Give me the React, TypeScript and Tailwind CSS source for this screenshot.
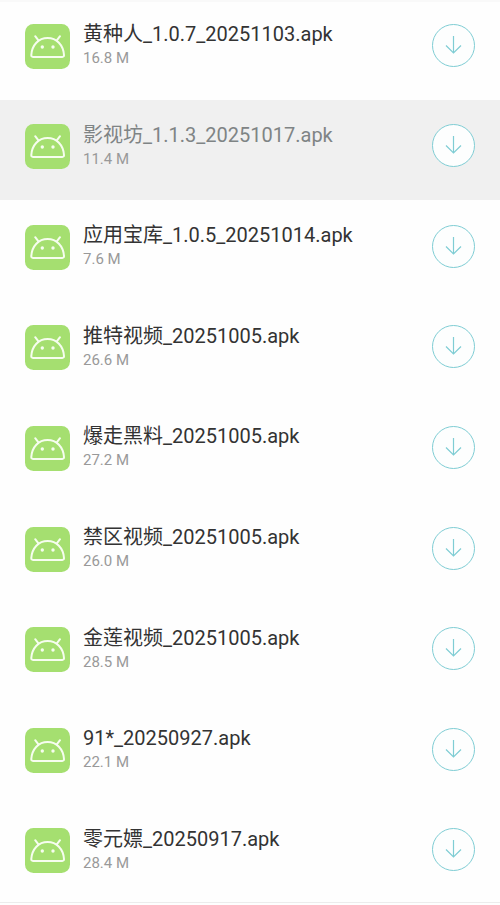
type ApkFile = { name: string; size: string; pressed?: boolean };

const files: ApkFile[] = [
  { name: "黄种人_1.0.7_20251103.apk", size: "16.8 M" },
  { name: "影视坊_1.1.3_20251017.apk", size: "11.4 M", pressed: true },
  { name: "应用宝库_1.0.5_20251014.apk", size: "7.6 M" },
  { name: "推特视频_20251005.apk", size: "26.6 M" },
  { name: "爆走黑料_20251005.apk", size: "27.2 M" },
  { name: "禁区视频_20251005.apk", size: "26.0 M" },
  { name: "金莲视频_20251005.apk", size: "28.5 M" },
  { name: "91*_20250927.apk", size: "22.1 M" },
  { name: "零元嫖_20250917.apk", size: "28.4 M" },
];

function AndroidIcon() {
  return (
    <svg viewBox="0 0 45 45" className="size-[45px] shrink-0" aria-hidden="true">
      <rect width="45" height="45" rx="8.5" fill="#a5df70" />
      <g fill="none" stroke="#f6fdef" strokeWidth="2" strokeLinecap="round" strokeLinejoin="round">
        <path d="M8 32.9C6.8 32.9 6.2 32.3 6.3 31C7 21.1 13.6 14 22.6 14S38.3 21.1 39 31C39.1 32.3 38.5 32.9 37.3 32.9Z" />
        <path d="M13.4 16.4L10.2 12.2M31.8 16.4L35 12.2" />
      </g>
      <circle cx="17.3" cy="23" r="1.7" fill="#f6fdef" />
      <circle cx="28" cy="23" r="1.7" fill="#f6fdef" />
    </svg>
  );
}

function DownloadButton({ name }: { name: string }) {
  return (
    <button
      type="button"
      aria-label={`下载 ${name}`}
      className="mb-0.5 flex size-[43px] shrink-0 items-center justify-center rounded-full border border-[#7fcdd4] bg-[#fdfefe] text-[#7fcdd4]"
    >
      <svg viewBox="0 0 17 19" className="h-[19px] w-[17px]" fill="none" stroke="currentColor" strokeWidth="1.2" aria-hidden="true">
        <path d="M8.5 0V17M1 9.5L8.5 17L16 9.5" />
      </svg>
    </button>
  );
}

function FileRow({ file }: { file: ApkFile }) {
  return (
    <li
      className={`flex items-center gap-[13px] px-[25px] pb-1.5 ${file.pressed ? "bg-[#f0f0f0]" : ""}`}
    >
      <AndroidIcon />
      <div className="flex min-w-0 flex-1 flex-col gap-0.5 pb-0.5">
        <p className={`truncate text-[20px] leading-6 ${file.pressed ? "text-[#7f8485]" : "text-[#333333]"}`}>
          {file.name}
        </p>
        <p className="text-[15px] leading-5 text-[#999999]">{file.size}</p>
      </div>
      <DownloadButton name={file.name} />
    </li>
  );
}

export default function App() {
  return (
    <main className="flex min-h-screen flex-col bg-[#fefefe] font-[Roboto,'Noto_Sans_CJK_SC',sans-serif]">
      <div className="h-0.5 bg-[#f9f9f9]" />
      <ul className="-mt-[3px] grid flex-1 auto-rows-fr">
        {files.map((file) => (
          <FileRow key={file.name} file={file} />
        ))}
      </ul>
      <div className="-mt-0.5 h-[3px] border-t border-[#ececec]" />
    </main>
  );
}
